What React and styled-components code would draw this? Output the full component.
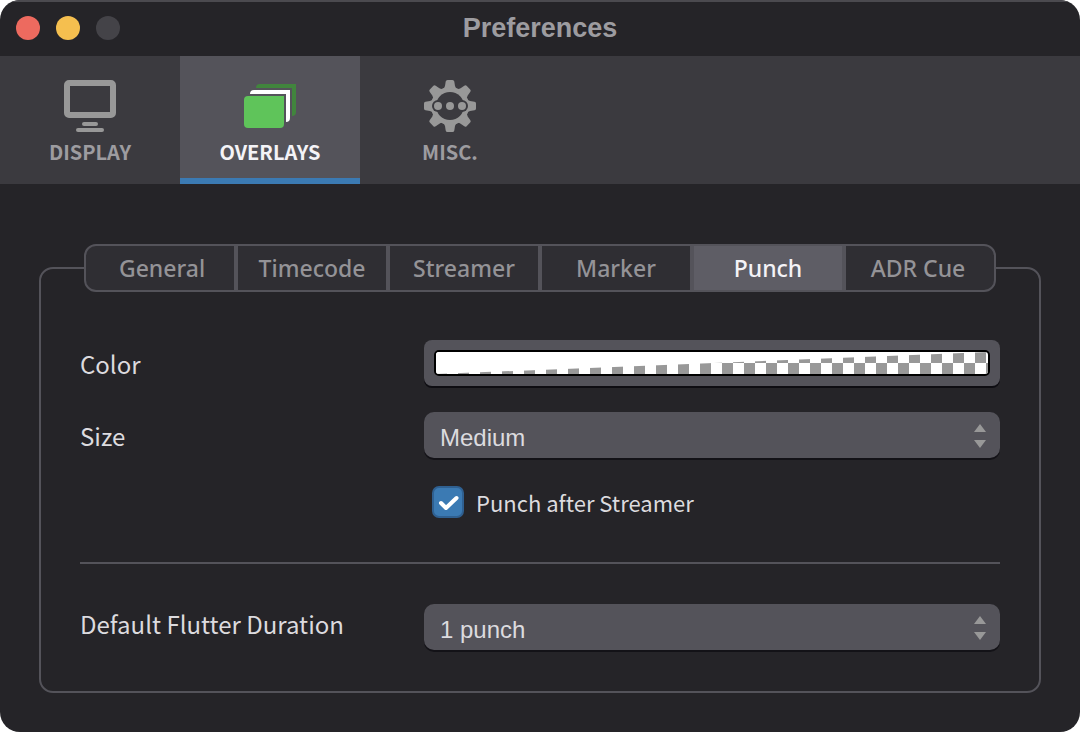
import React, { useState } from 'react'
import styled, { createGlobalStyle } from 'styled-components';

const GlobalStyle = createGlobalStyle`
  * {
    box-sizing: border-box;
  }
  body {
    margin: 0;
    background: #fff;
  }
  button, select, input {
    margin: 0;
    font: inherit;
  }
`;

const sourceFont = '"Noto Sans CJK SC", "Noto Sans", sans-serif';
const systemFont = '"Liberation Sans", Arial, sans-serif';

const Window = styled.main`
  display: flex;
  flex-direction: column;
  min-height: 100vh;
  overflow: hidden;
  border-radius: 20px;
  background: #252428;
  color: #dcdbdf;
  font-family: ${sourceFont};
  font-size: 24px;
`;

const TitleBar = styled.header`
  display: grid;
  grid-template-columns: 1fr auto 1fr;
  align-items: center;
  height: 56px;
  padding: 0 16px 2px;
  border-top: 2px solid #4b4a4f;
`;

const TrafficLights = styled.div`
  display: flex;
  gap: 16px;
`;

const Light = styled.button`
  width: 24px;
  height: 24px;
  padding: 0;
  border: 0;
  border-radius: 50%;
  background: ${({ $color }) => $color};
`;

const Title = styled.h1`
  margin: 0;
  color: #9d9ca0;
  font-family: ${systemFont};
  font-size: 27px;
  font-weight: 700;
  line-height: 32px;
`;

const Toolbar = styled.nav`
  display: flex;
  height: 128px;
  background: #3b3a3f;
`;

const ToolbarButton = styled.button`
  display: flex;
  flex-direction: column;
  align-items: center;
  gap: 8px;
  width: 180px;
  padding: 24px 0 0;
  border: 0;
  border-bottom: 6px solid ${({ $active }) => ($active ? '#3b7ab3' : 'transparent')};
  background: ${({ $active }) => ($active ? '#54535a' : 'transparent')};
  background-clip: padding-box;
  color: ${({ $active }) => ($active ? '#f4f3f7' : '#9d9ca0')};
  font-size: 20px;
  font-weight: 700;
  line-height: 24px;
`;

const Content = styled.div`
  flex: 1;
  padding: 83px 39px 39px;
`;

const Panel = styled.section`
  padding: 0 39px 39px;
  border: 2px solid #54535a;
  border-radius: 14px;
`;

const Tabs = styled.div`
  display: grid;
  grid-template-columns: repeat(6, 1fr);
  gap: 4px;
  height: 48px;
  margin: -25px 4px 48px;
  overflow: hidden;
  border: 2px solid #54535a;
  border-radius: 12px;
  background: #54535a;
`;

const Tab = styled.button`
  padding: 0;
  border: 0;
  background: ${({ $active }) => ($active ? '#5e5d65' : '#2f2e33')};
  color: ${({ $active }) => ($active ? '#f4f3f7' : '#949397')};
  font-family: "Noto Sans", sans-serif;
  font-size: 23px;
  font-weight: 500;
  line-height: 32px;

  &:first-child {
    padding-left: 4px;
  }
  &:last-child {
    padding-right: 4px;
  }
`;

const Rows = styled.div`
  display: grid;
  gap: 24px;
`;

const Row = styled.div`
  display: grid;
  grid-template-columns: 344px 1fr;
  align-items: ${({ $align }) => $align || 'center'};
`;

const Label = styled.label`
  line-height: 40px;
`;

const Divider = styled.hr`
  height: 2px;
  margin: 42px 0 40px;
  border: 0;
  background: #54535a;
`;

const ColorButton = styled.button`
  display: block;
  width: 100%;
  height: 46px;
  margin-bottom: 2px;
  padding: 10px;
  border: 0;
  border-radius: 8px;
  background: #54535a;
  box-shadow: 0 2px 0 #0e0d12;
`;

const Swatch = styled.svg`
  display: block;
  width: 100%;
  height: 26px;
  border: 2px solid #000;
  border-radius: 5px;
  background: #fff;
`;

const SelectBox = styled.div`
  position: relative;
  margin-bottom: 2px;
`;

const SelectInput = styled.select`
  appearance: none;
  display: block;
  width: 100%;
  height: 46px;
  padding: 4px 48px 0 16px;
  border: 0;
  border-radius: 10px;
  background: #54535a;
  box-shadow: 0 2px 0 #131217;
  color: #dcdbdf;
  font-family: ${systemFont};
  font-size: 24px;
`;

const Arrows = styled.svg`
  position: absolute;
  top: 12px;
  right: 14px;
  pointer-events: none;
`;

const CheckRow = styled.div`
  display: flex;
  align-items: center;
  gap: 12px;
  height: 36px;
  padding-left: 352px;
  font-size: 22px;
`;

const CheckBox = styled.div`
  position: relative;
  width: 32px;
  height: 32px;
`;

const CheckInput = styled.input`
  appearance: none;
  display: block;
  width: 32px;
  height: 32px;
  border: 2px solid #2f6091;
  border-radius: 7px;
  background: ${({ checked }) => (checked ? '#3b7ab3' : '#54535a')};
`;

const CheckMark = styled.svg`
  position: absolute;
  inset: 0;
  pointer-events: none;
`;

function DisplayIcon() {
  return (
    <svg width="52" height="52" viewBox="0 0 52 52" aria-hidden="true">
      <rect x="3" y="3" width="46" height="32" rx="2" fill="none" stroke="#989898" strokeWidth="6" />
      <rect x="18" y="42" width="16" height="4" rx="2" fill="#989898" />
      <rect x="12" y="48" width="28" height="4" rx="2" fill="#989898" />
    </svg>
  )
}

// each sheet leaves a 2px gap to the one in front of it
function OverlaysIcon() {
  return (
    <svg width="52" height="52" viewBox="0 0 52 52" aria-hidden="true">
      <path d="M12 8a4 4 0 0 1 4-4H52V32a4 4 0 0 1-4 4V8Z" fill="#41853d" />
      <path d="M6 14a4 4 0 0 1 4-4H46V38a4 4 0 0 1-4 4V14Z" fill="#fff" />
      <path d="M4 16H40V44a4 4 0 0 1-4 4H4a4 4 0 0 1-4-4V20a4 4 0 0 1 4-4Z" fill="#5fc45a" />
    </svg>
  )
}

const teeth = [0, 45, 90, 135, 180, 225, 270, 315];

function MiscIcon() {
  return (
    <svg width="52" height="52" viewBox="0 0 52 52" aria-hidden="true">
      <mask id="gear-hole">
        <rect width="52" height="52" fill="#fff" />
        <circle cx="26" cy="26" r="14" fill="#000" />
        <circle cx="14" cy="26" r="6" fill="#000" />
        <circle cx="38" cy="26" r="6" fill="#000" />
      </mask>
      <g fill="#989898" mask="url(#gear-hole)">
        <circle cx="26" cy="26" r="19" />
        {teeth.map((angle) => (
          <path
            key={angle}
            d="M18 9.500Q20.500 8.500 21 6L21.700 1.500Q22 0 23.500 0H28.500Q30 0 30.300 1.500L31 6Q31.500 8.500 34 9.500L26 14Z"
            transform={`rotate(${angle} 26 26)`}
          />
        ))}
      </g>
      <g fill="#989898">
        <circle cx="14" cy="26" r="4" />
        <circle cx="26" cy="26" r="4" />
        <circle cx="38" cy="26" r="4" />
      </g>
    </svg>
  )
}

function Select({ id, value, options }) {
  return (
    <SelectBox>
      <SelectInput id={id} defaultValue={value}>
        {options.map((option) => <option key={option}>{option}</option>)}
      </SelectInput>
      <Arrows width="12" height="24" viewBox="0 0 12 24" aria-hidden="true">
        <path d="M6 0L12 8H0ZM0 16H12L6 24Z" fill="#989898" />
      </Arrows>
    </SelectBox>
  )
}

const sections = [
  { name: 'DISPLAY', Icon: DisplayIcon },
  { name: 'OVERLAYS', Icon: OverlaysIcon },
  { name: 'MISC.', Icon: MiscIcon },
];

const tabs = ['General', 'Timecode', 'Streamer', 'Marker', 'Punch', 'ADR Cue'];

function App() {
  const [section, setSection] = useState('OVERLAYS');
  const [tab, setTab] = useState('Punch');
  const [afterStreamer, setAfterStreamer] = useState(true);

  return (
    <Window>
      <GlobalStyle />
      <TitleBar>
        <TrafficLights>
          <Light $color="#ed6a5f" aria-label="Close" />
          <Light $color="#f5bf4f" aria-label="Minimize" />
          <Light $color="#444348" aria-label="Zoom" disabled />
        </TrafficLights>
        <Title>Preferences</Title>
      </TitleBar>

      <Toolbar>
        {sections.map(({ name, Icon }) => (
          <ToolbarButton key={name} $active={name === section} onClick={() => setSection(name)}>
            <Icon />
            {name}
          </ToolbarButton>
        ))}
      </Toolbar>

      <Content>
        <Panel>
          <Tabs role="tablist">
            {tabs.map((name) => (
              <Tab
                key={name}
                role="tab"
                aria-selected={name === tab}
                $active={name === tab}
                onClick={() => setTab(name)}
              >
                {name}
              </Tab>
            ))}
          </Tabs>

          <Rows>
            <Row>
              <Label htmlFor="color">Color</Label>
              <ColorButton id="color">
                <Swatch viewBox="0 0 552 22" preserveAspectRatio="none" aria-hidden="true">
                  <pattern id="checker" width="22" height="22" patternUnits="userSpaceOnUse">
                    <path d="M11 0H22V11H11ZM0 11H11V22H0Z" fill="#989898" />
                  </pattern>
                  <rect width="552" height="22" fill="url(#checker)" />
                  <path d="M0 0H552L0 22Z" fill="#fff" />
                </Swatch>
              </ColorButton>
            </Row>
            <Row>
              <Label htmlFor="size">Size</Label>
              <Select id="size" value="Medium" options={['Small', 'Medium', 'Large']} />
            </Row>
            <CheckRow>
              <CheckBox>
                <CheckInput
                  id="after-streamer"
                  type="checkbox"
                  checked={afterStreamer}
                  onChange={(e) => setAfterStreamer(e.target.checked)}
                />
                {afterStreamer && (
                  <CheckMark width="32" height="32" viewBox="0 0 32 32" aria-hidden="true">
                    <path
                      d="M9 17L14 22L24.500 12"
                      fill="none"
                      stroke="#fff"
                      strokeWidth="4"
                      strokeLinecap="round"
                      strokeLinejoin="round"
                    />
                  </CheckMark>
                )}
              </CheckBox>
              <Label htmlFor="after-streamer">Punch after Streamer</Label>
            </CheckRow>
          </Rows>

          <Divider />

          <Row $align="start">
            <Label htmlFor="flutter">Default Flutter Duration</Label>
            <Select id="flutter" value="1 punch" options={['1 punch', '2 punches', '3 punches']} />
          </Row>
        </Panel>
      </Content>
    </Window>
  )
}

export default App
